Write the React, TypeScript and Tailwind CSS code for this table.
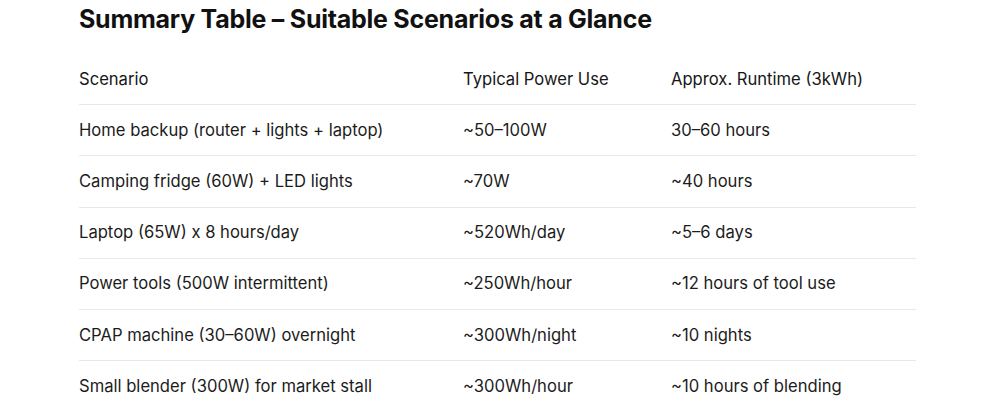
const rows = [
  ['Home backup (router + lights + laptop)', '~50–100W', '30–60 hours'],
  ['Camping fridge (60W) + LED lights', '~70W', '~40 hours'],
  ['Laptop (65W) x 8 hours/day', '~520Wh/day', '~5–6 days'],
  ['Power tools (500W intermittent)', '~250Wh/hour', '~12 hours of tool use'],
  ['CPAP machine (30–60W) overnight', '~300Wh/night', '~10 nights'],
  ['Small blender (300W) for market stall', '~300Wh/hour', '~10 hours of blending'],
]

export default function App() {
  return (
    <div className="min-h-screen bg-white pl-[79px] pt-[2px]" style={{ fontFamily: 'Inter, "Noto Sans", sans-serif' }}>
      <h1 className="text-[25px] leading-[34px] font-bold text-[#111111] tracking-[-0.01em]">
        Summary Table – Suitable Scenarios at a Glance
      </h1>
      <div className="mt-[18px] w-[837px] text-[16.6px] text-[#1c1c1c]">
        <div className="grid grid-cols-[384px_208px_245px] h-[51.2px] items-center border-b border-[#e8e8e8] text-[#161616]">
          <div>Scenario</div>
          <div>Typical Power Use</div>
          <div>Approx. Runtime (3kWh)</div>
        </div>
        {rows.map((r, i) => (
          <div
            key={i}
            className={
              'grid grid-cols-[384px_208px_245px] h-[51.2px] items-center ' +
              (i < rows.length - 1 ? 'border-b border-[#e8e8e8]' : '')
            }
          >
            <div>{r[0]}</div>
            <div>{r[1]}</div>
            <div>{r[2]}</div>
          </div>
        ))}
      </div>
    </div>
  )
}
